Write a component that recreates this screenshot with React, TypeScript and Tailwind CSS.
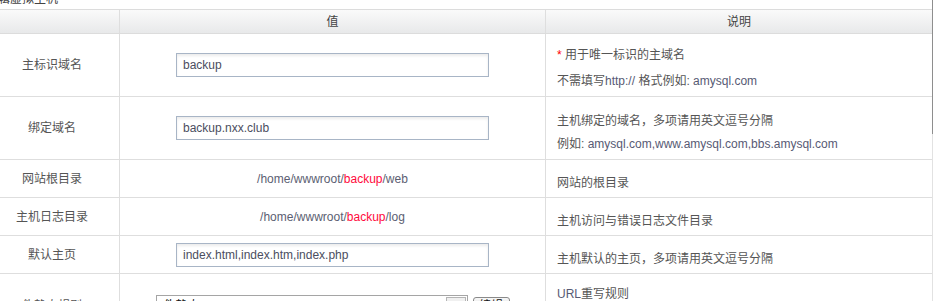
import React from "react";

const F = { fontFamily: '"Liberation Sans", Arial, "Noto Sans CJK SC", sans-serif' };

function Lat({ children }: { children: React.ReactNode }) {
  return <span className="text-[#575a74]">{children}</span>;
}

function Input({ value }: { value: string }) {
  return (
    <div className="mx-auto w-[313px] h-[24px] border border-[#a8b5c6] bg-white shadow-[inset_0_2px_3px_rgba(0,0,0,0.08)] flex items-center pl-[6px] text-[12px] text-[#4b4e60]">
      {value}
    </div>
  );
}

function Path({ tail }: { tail: string }) {
  return (
    <div className="text-center text-[12px] text-[#5b5e72]">
      /home/wwwroot/<span className="text-[#ff0a3c]">backup</span>/{tail}
    </div>
  );
}

function Row({
  h,
  label,
  value,
  desc,
  descPad = "pt-[9px]",
}: {
  h: string;
  label: string;
  value: React.ReactNode;
  desc: React.ReactNode;
  descPad?: string;
}) {
  return (
    <div className={`grid grid-cols-[120px_426px_1fr] shrink-0 border-b border-[#dedede] ${h}`}>
      <div className="border-r border-[#dedede] flex items-center justify-center pr-[15px] text-[12px] text-[#555]">
        {label}
      </div>
      <div className="border-r border-[#dedede] flex flex-col justify-center">{value}</div>
      <div className={`flex flex-col justify-center pl-[11px] text-[12px] leading-[23px] text-[#555] ${descPad}`}>
        {desc}
      </div>
    </div>
  );
}

export default function App() {
  return (
    <div className="w-[934px] h-[301px] overflow-hidden bg-white flex" style={F}>
      <div className="w-[932px] shrink-0 flex flex-col">
        <div className="h-[9px] shrink-0 overflow-hidden">
          <div className="ml-[-14px] mt-[-7px] leading-[12px] text-[12px] text-[#444] whitespace-nowrap">
            编辑虚拟主机
          </div>
        </div>
        <div className="grid grid-cols-[120px_426px_1fr] shrink-0 h-[25px] border-y border-[#dcdcdc] bg-gradient-to-b from-[#fafafa] to-[#e8e9ea] text-[12px] text-[#444]">
          <div className="border-r border-[#dedede]"></div>
          <div className="border-r border-[#dedede] flex items-center justify-center">值</div>
          <div className="flex items-center justify-center">说明</div>
        </div>

        <Row
          h="h-[63px]"
          label="主标识域名"
          value={<Input value="backup" />}
          descPad="pt-[6px]"
          desc={
            <>
              <div>
                <span className="text-[#ff0000]">*</span> 用于唯一标识的主域名
              </div>
              <div className="mt-[3px]">
                不需填写<Lat>http://</Lat> 格式例如: <Lat>amysql.com</Lat>
              </div>
            </>
          }
        />
        <Row
          h="h-[63px]"
          label="绑定域名"
          value={<Input value="backup.nxx.club" />}
          desc={
            <>
              <div>主机绑定的域名，多项请用英文逗号分隔</div>
              <div>
                例如: <Lat>amysql.com,www.amysql.com,bbs.amysql.com</Lat>
              </div>
            </>
          }
        />
        <Row h="h-[38px]" label="网站根目录" value={<Path tail="web" />} desc={<div>网站的根目录</div>} />
        <Row h="h-[38px]" label="主机日志目录" value={<Path tail="log" />} desc={<div>主机访问与错误日志文件目录</div>} />
        <Row
          h="h-[38px]"
          label="默认主页"
          value={<Input value="index.html,index.htm,index.php" />}
          desc={<div>主机默认的主页，多项请用英文逗号分隔</div>}
        />
        <div className="grid grid-cols-[120px_426px_1fr] h-[64px] shrink-0">
          <div className="border-r border-[#dedede] flex items-center justify-center pr-[15px] text-[12px] text-[#555]">
            伪静态规则
          </div>
          <div className="border-r border-[#dedede] flex items-center justify-center gap-[5px]">
            <div className="w-[312px] h-[22px] border border-[#a5a5a5] bg-white flex items-center text-[12px] text-[#111]">
              <div className="flex-1 pl-[7px] whitespace-nowrap overflow-hidden">伪静态 - discuz.conf (default)</div>
              <div className="w-[20px] h-[18px] mr-[1px] border border-[#b5b5b5] bg-[#f0f0f0] flex items-center justify-center">
                <svg width="7" height="4" viewBox="0 0 7 4">
                  <path d="M0 0h7L3.5 4z" fill="#333" />
                </svg>
              </div>
            </div>
            <div className="w-[37px] h-[19px] border border-[#8a8a8a] rounded-[3px] bg-gradient-to-b from-[#f6f6f6] to-[#dddddd] flex items-center justify-center text-[12px] text-[#111]">
              编辑
            </div>
          </div>
          <div className="flex flex-col justify-start pl-[11px] pt-[9px] text-[12px] leading-[23px] text-[#555]">
            <div>
              <Lat>URL</Lat>重写规则
            </div>
            <div>选择规则后点击编辑可修改</div>
          </div>
        </div>
      </div>
      <div className="w-[1px] shrink-0 flex flex-col">
        <div className="h-[134px] bg-[#8e8e8e]"></div>
        <div className="flex-1 bg-[#e2e2e2]"></div>
      </div>
    </div>
  );
}
